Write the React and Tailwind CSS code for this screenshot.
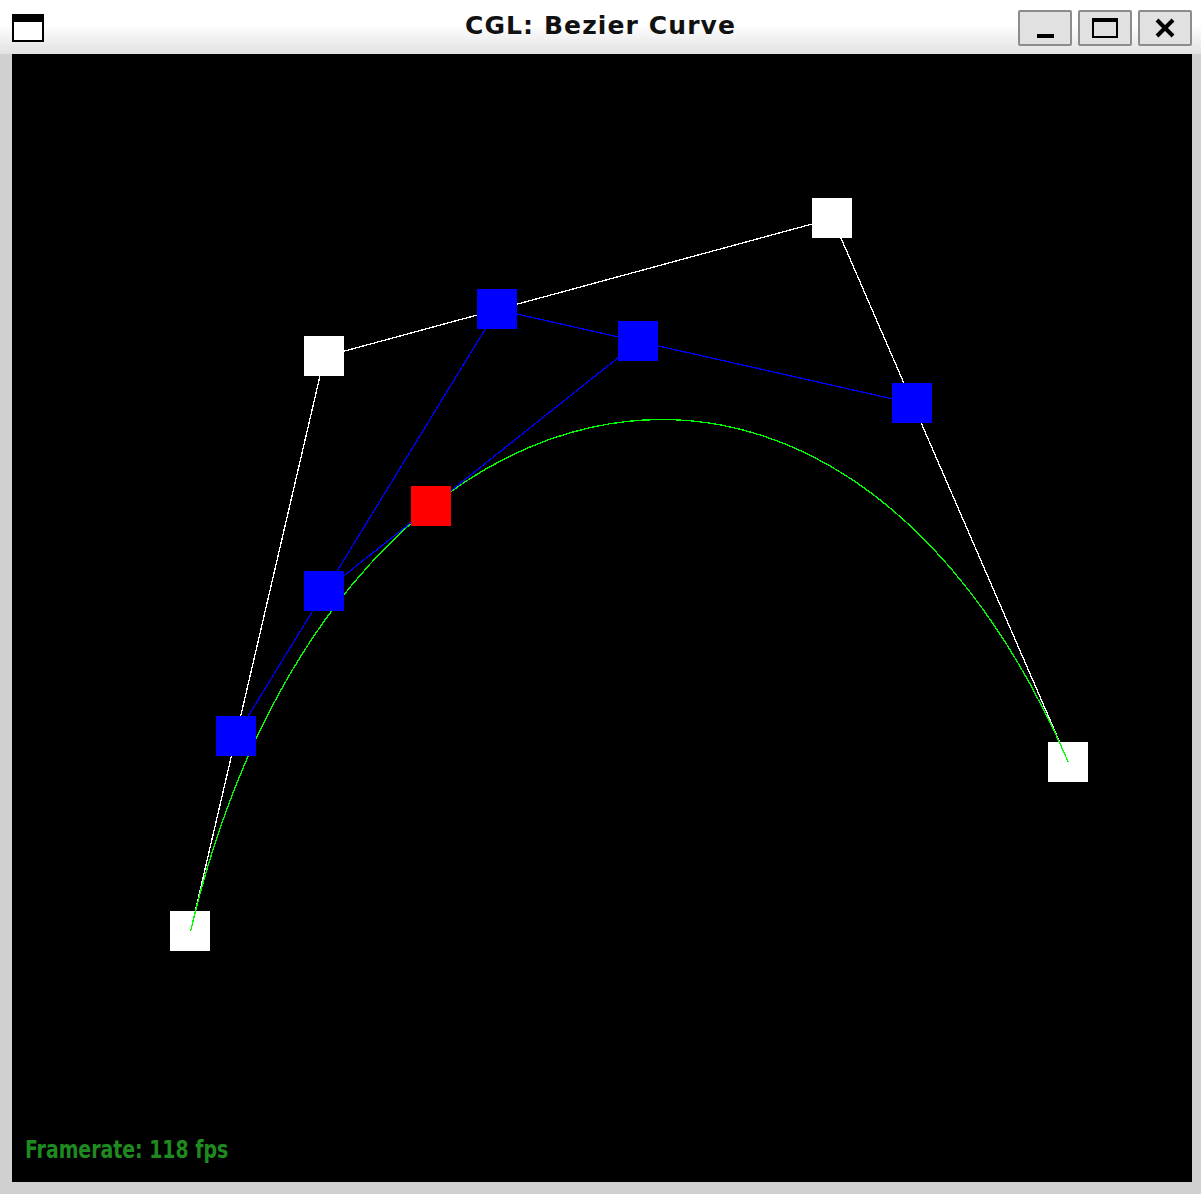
import React from 'react';

// control points in canvas space (canvas starts at 12, 54)
const P = [
    [178, 877],
    [312, 302],
    [820, 164],
    [1056, 708],
];
const T = 0.34;

const lerp = (a, b, t) => [a[0] + (b[0] - a[0]) * t, a[1] + (b[1] - a[1]) * t];

function Square({ p, fill }) {
    return <rect x={Math.round(p[0]) - 20} y={Math.round(p[1]) - 20} width="40" height="40" fill={fill} />;
}

function Polyline({ pts, stroke }) {
    return (
        <polyline
            points={pts.map((p) => `${p[0] + 0.5},${p[1] + 0.5}`).join(' ')}
            fill="none"
            stroke={stroke}
            strokeWidth="1.3"
        />
    );
}

function BezierCanvas() {
    const B = [lerp(P[0], P[1], T), lerp(P[1], P[2], T), lerp(P[2], P[3], T)];
    const C = [lerp(B[0], B[1], T), lerp(B[1], B[2], T)];
    const D = lerp(C[0], C[1], T);
    const curve = `M${P[0][0] + 0.5},${P[0][1] + 0.5} C${P[1][0] + 0.5},${P[1][1] + 0.5} ${P[2][0] + 0.5},${P[2][1] + 0.5} ${P[3][0] + 0.5},${P[3][1] + 0.5}`;

    return (
        <svg width="1180" height="1128" viewBox="0 0 1180 1128" shapeRendering="crispEdges" className="block">
            <Polyline pts={P} stroke="#ffffff" />
            {P.map((p, i) => <Square key={'p' + i} p={p} fill="#ffffff" />)}
            <path d={curve} fill="none" stroke="#00ff00" strokeWidth="1.3" />
            <Polyline pts={B} stroke="#0000ff" />
            <Polyline pts={C} stroke="#0000ff" />
            {B.map((p, i) => <Square key={'b' + i} p={p} fill="#0000ff" />)}
            {C.map((p, i) => <Square key={'c' + i} p={p} fill="#0000ff" />)}
            <Square p={D} fill="#ff0000" />
        </svg>
    );
}

function TitleButton({ children }) {
    return (
        <div className="w-[54px] h-[36px] bg-[#e1e1e1] border-2 border-[#8c8c8c] rounded-[2px] flex items-center justify-center">
            {children}
        </div>
    );
}

export default function App() {
    return (
        <div className="w-[1201px] h-[1194px] bg-[#d0d0d0] flex flex-col overflow-hidden">

            {/* Title bar */}
            <div className="h-[54px] shrink-0 relative bg-linear-to-b from-white from-45% to-[#e2e2e2] flex items-start">
                <div className="ml-[12px] mt-[14px] w-[32px] h-[28px] border-2 border-t-[8px] border-black bg-white"></div>
                <div className="absolute inset-x-0 top-[9px] text-center text-[25px] leading-[34px] font-bold text-[#111] tracking-[1.1px]" style={{ fontFamily: '"DejaVu Sans", sans-serif' }}>
                    CGL: Bezier Curve
                </div>
                <div className="ml-auto mr-[9px] mt-[10px] flex gap-[6px] relative">
                    <TitleButton>
                        <div className="w-[17px] h-[4px] bg-black mt-[16px]"></div>
                    </TitleButton>
                    <TitleButton>
                        <div className="w-[26px] h-[20px] border-2 border-t-[4px] border-black"></div>
                    </TitleButton>
                    <TitleButton>
                        <svg width="20" height="20" viewBox="0 0 20 20">
                            <path d="M2 2 L18 18 M18 2 L2 18" stroke="#000" strokeWidth="4" />
                        </svg>
                    </TitleButton>
                </div>
            </div>

            {/* Canvas */}
            <div className="ml-[12px] w-[1180px] h-[1128px] bg-black relative">
                <BezierCanvas />
                <div className="absolute left-[13px] top-[1081px] origin-left scale-x-[0.875] text-[24px] leading-[30px] font-bold text-[#1f8a1f]" style={{ fontFamily: '"DejaVu Sans Condensed", "DejaVu Sans", sans-serif' }}>
                    Framerate: 118 fps
                </div>
            </div>
        </div>
    );
}
